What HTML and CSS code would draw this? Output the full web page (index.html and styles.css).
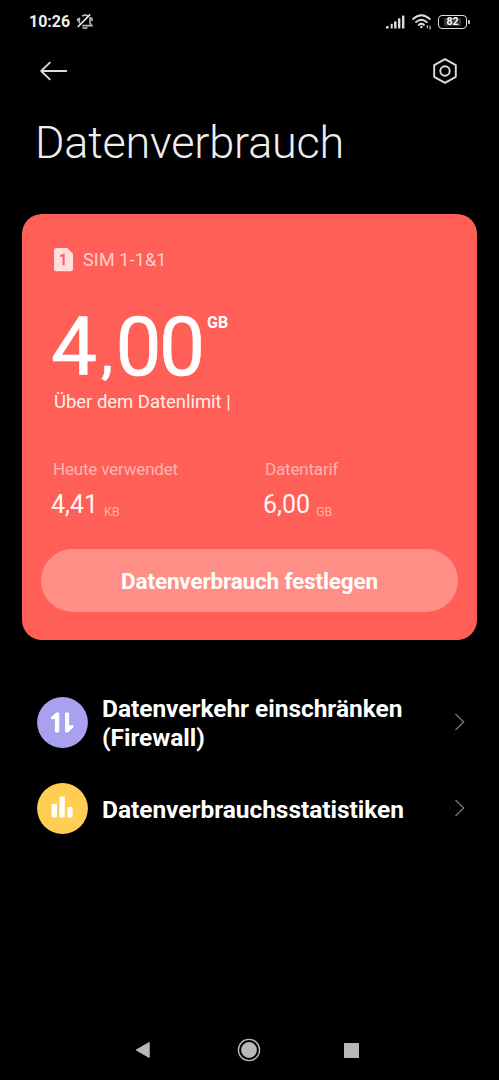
FILE: index.html
```html
<!DOCTYPE html>
<html lang="de">
<head>
<meta charset="utf-8">
<title>Datenverbrauch</title>
<link rel="stylesheet" href="styles.css">
</head>
<body>
<div class="screen">
  <header class="status">
    <span class="clock">10:26</span>
    <svg class="bell" width="18" height="18" viewBox="0 0 18 18" fill="none" stroke="#b8b8b8" stroke-width="1.6">
      <path d="M6 3.2Q9 1.2 12 3M14 5V10.2L15.8 12.6H6.4M13.6 4.6L16 5.6V8"/>
      <path d="M3.4 10.6V5.4L1.6 6.2L1.8 8.4M6.4 14.4L9 15.4L11.4 14.4" />
      <path d="M1.8 14L14.2 1.4" stroke="#f0f0f0" stroke-width="1.6"/>
    </svg>
    <span class="spacer"></span>
    <svg class="signal" width="19" height="14" viewBox="0 0 19 14" fill="#ddd">
      <rect x="0" y="11" width="2.6" height="2.6" rx=".6"/><rect x="4.7" y="8.8" width="2" height="4.8" rx=".6"/><rect x="8.1" y="6.2" width="2.4" height="7.4" rx=".6"/><rect x="12" y="3.2" width="2.4" height="10.4" rx=".6"/><rect x="16" y=".5" width="2.4" height="13.1" rx=".6"/>
    </svg>
    <svg class="wifi" width="20" height="16" viewBox="0 0 20 16" fill="none" stroke="#ddd" stroke-width="1.8" stroke-linecap="round">
      <path d="M1 5Q9.3-2.6 17.8 5M4 8.1Q9.3 3.4 14.8 8.1M6.8 11Q9.3 8.6 12 11"/><circle cx="9.4" cy="13" r="1.2" fill="#ddd" stroke="none"/>
      <path d="M15.4 12V14M14.8 12.6L15.4 12M18 12V14.8M18.6 14.2L18 14.8" stroke-width=".9"/>
    </svg>
    <span class="battery"><span class="level">82</span></span><span class="tip"></span>
  </header>
  <nav class="toolbar">
    <svg width="28" height="20" viewBox="0 0 28 20" fill="none" stroke="#dcdcdc" stroke-width="1.8" stroke-linecap="round" stroke-linejoin="round"><path d="M26.3 10H1.2M9.8 1.7L1.2 10L9.8 18.3"/></svg>
    <svg width="26" height="28" viewBox="0 0 26 28" fill="none" stroke="#dcdcdc" stroke-width="1.9" stroke-linejoin="round"><path d="M13 2.2L23.8 8.2V19.8L13 25.8L2.2 19.8V8.2Z"/><circle cx="13" cy="14" r="4.7"/></svg>
  </nav>
  <h1 class="title">Datenverbrauch</h1>
  <main class="card">
    <div class="sim">
      <svg width="19" height="24" viewBox="0 0 19 24"><path d="M2.5 0H13.2L19 5.8V20.8Q19 23.3 16.5 23.3H2.5Q0 23.3 0 20.8V2.5Q0 0 2.5 0Z" fill="#ffdedd"/><path d="M6.2 8.3L9.6 6.9V17.3" fill="none" stroke="#ff5f59" stroke-width="2.1"/></svg>
      <span class="sim-name">SIM 1-1&amp;1</span>
    </div>
    <div class="amount"><span class="number">4<span class="comma">,</span>00</span><span class="unit">GB</span></div>
    <div class="notice">Über dem Datenlimit |</div>
    <div class="stats">
      <div class="stat"><div class="label">Heute verwendet</div><div class="value"><span class="figure">4,41</span><span class="small">KB</span></div></div>
      <div class="stat"><div class="label">Datentarif</div><div class="value"><span class="figure">6,00</span><span class="small">GB</span></div></div>
    </div>
    <button class="action">Datenverbrauch festlegen</button>
  </main>
  <section class="list">
    <div class="row">
      <svg class="badge" width="51" height="51" viewBox="0 0 51 51"><circle cx="25.5" cy="25.5" r="25.4" fill="#a9a0ef"/><g fill="#fff" stroke="#fff" stroke-width="1" stroke-linejoin="round"><path d="M19.2 16H21.8V35H18.4V21.7H14.2V20.7Z"/><path d="M28.6 16H31.6V28.8H36.2V29.8L31.2 35H28.6Z"/></g></svg>
      <span class="name">Datenverkehr einschränken (Firewall)</span>
      <svg width="12" height="18" viewBox="0 0 12 18" fill="none" stroke="#777" stroke-width="1.3"><path d="M1.5 1L9.7 9L1.5 17"/></svg>
    </div>
    <div class="row">
      <svg class="badge" width="51" height="51" viewBox="0 0 51 51"><circle cx="25.5" cy="25.5" r="25.4" fill="#ffce52"/><g fill="#fff"><rect x="14.6" y="20.8" width="5.4" height="13.6" rx="1"/><rect x="22.4" y="13.5" width="5.4" height="20.9" rx="1"/><rect x="30.4" y="24" width="5.2" height="10.4" rx="1"/></g></svg>
      <span class="name single">Datenverbrauchsstatistiken</span>
      <svg width="12" height="18" viewBox="0 0 12 18" fill="none" stroke="#777" stroke-width="1.3"><path d="M1.5 1L9.7 9L1.5 17"/></svg>
    </div>
  </section>
  <footer class="keys">
    <svg width="16" height="20" viewBox="0 0 16 20"><path d="M1.2 10L14.2 2.5V17.5Z" fill="#b8b8b8" stroke="#b8b8b8" stroke-linejoin="round"/></svg>
    <svg class="home" width="24" height="24" viewBox="0 0 24 24"><circle cx="12" cy="12" r="10.6" fill="none" stroke="#b8b8b8" stroke-width="1.4"/><circle cx="12" cy="12" r="7.9" fill="#b8b8b8"/></svg>
    <svg width="15" height="15"><rect width="15" height="15" rx=".6" fill="#b8b8b8"/></svg>
  </footer>
</div>
</body>
</html>
```
FILE: styles.css
```css
* { box-sizing: border-box; }
body { margin: 0; background: #000; color: #fff; font-family: Roboto, "Liberation Sans", sans-serif; }
svg { display: block; flex: none; }
.screen { width: 499px; height: 1080px; display: flex; flex-direction: column; background: #000; overflow: hidden; }
.status { height: 43px; flex: none; display: flex; align-items: center; padding: 0 29px 0 29px; }
.clock { font-size: 16px; font-weight: 700; line-height: 20px; color: #eee; }
.bell { margin-left: 6px; }
.spacer { flex: 1; }
.signal { margin-right: 7px; }
.wifi { margin-right: 6px; }
.battery { width: 29px; height: 14px; border: 1.5px solid #ddd; border-radius: 4px; display: flex; align-items: center; justify-content: center; }
.level { width: 17px; height: 8px; background: #333; font-size: 10.5px; line-height: 8px; font-weight: 700; text-align: center; }
.tip { width: 2px; height: 4px; background: #bbb; margin-left: 1px; }
.toolbar { height: 56px; flex: none; display: flex; align-items: center; justify-content: space-between; padding: 0 41px 0 40px; }
.title { margin: 19px 0 0 35px; font-size: 45px; line-height: 50px; font-weight: 300; letter-spacing: -0.2px; color: #eee; white-space: nowrap; }
.card { width: 455px; height: 426px; flex: none; margin: 46px 0 0 22px; padding: 34px 19px 28px; border-radius: 20px; background: #ff5f57; display: flex; flex-direction: column; }
.sim { height: 24px; display: flex; align-items: center; padding-left: 13px; }
.sim-name { margin-left: 10px; font-size: 18px; line-height: 24px; letter-spacing: 0.15px; color: #ffd0cd; }
.amount { display: flex; height: 84px; margin-top: 33px; padding-left: 9px; }
.number { width: 157px; font-size: 82px; line-height: 84px; font-weight: 400; letter-spacing: -2.6px; padding-left: 1px; white-space: nowrap; -webkit-text-stroke: 0.6px #fff; }
.comma { display: inline-block; width: 17px; margin: 0 0 0 4px; font-size: 54px; line-height: 40px; font-weight: 500; text-align: center; vertical-align: 3px; letter-spacing: 0; }
.unit { font-size: 16px; line-height: 20px; font-weight: 700; letter-spacing: 0.1px; margin-top: 8px; }
.notice { margin-top: 1px; padding-left: 13px; font-size: 18.5px; line-height: 24px; letter-spacing: -0.03px; color: #fff0e9; }
.stats { display: grid; grid-template-columns: 212px 1fr; margin-top: 44px; padding-left: 10px; }
.label { font-size: 17px; line-height: 22px; letter-spacing: -0.18px; color: #ffb3ae; padding-left: 2px; }
.value { display: flex; align-items: flex-end; margin-top: 10px; }
.figure { font-size: 25px; line-height: 30px; color: #fff7f5; }
.small { font-size: 12.5px; line-height: 14px; margin: 0 0 1px 6px; color: #ffb3ae; }
.action { height: 63px; margin-top: auto; border: 0; border-radius: 32px; background: #ff8e87; color: #fff; font: 700 22.5px/28px Roboto, "Liberation Sans", sans-serif; letter-spacing: -0.16px; padding: 0; }
.list { margin-top: 39px; }
.row { height: 86px; display: flex; align-items: center; padding: 0 33px 0 37px; }
.name { flex: 1; margin-left: 14px; padding-top: 3px; max-width: 330px; font-size: 24.5px; line-height: 28.7px; letter-spacing: -0.04px; font-weight: 700; }
.single { padding-top: 5px; }
.row > svg:last-child { margin-left: auto; }
.keys { margin-top: auto; height: 60px; display: flex; align-items: center; justify-content: space-between; padding: 0 140px 0 135px; }
.home { margin-left: 3px; }
```
